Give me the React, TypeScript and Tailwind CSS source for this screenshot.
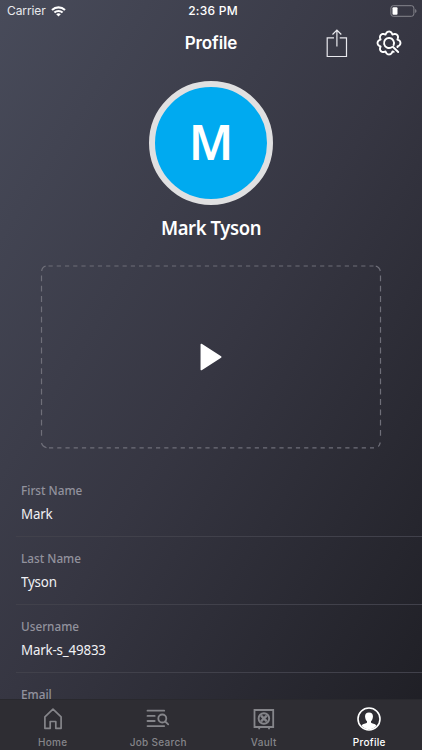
import type { ReactNode } from "react";

const fields = [
  { label: "First Name", value: "Mark" },
  { label: "Last Name", value: "Tyson" },
  { label: "Username", value: "Mark-s_49833" },
  { label: "Email", value: "" },
];

function StatusBar() {
  return (
    <div className="flex h-5 items-center justify-between pr-[5px] pl-[7px] text-[12px] leading-5 text-white">
      <div className="flex w-28 items-center gap-[5px] pt-0.5">
        <span className="tracking-[-0.1px] text-[#e9e9ed]">Carrier</span>
        <svg width="15" height="11" viewBox="0 0 14 11" fill="none" stroke="white" strokeWidth="2.1">
          <path d="M.5 4.1C4.3.4 9.7.4 13.500 4.100" />
          <path d="M2.900 6.600c2.300-2.200 5.900-2.200 8.200 0" />
          <path d="M7 10.600 4.700 8.300a3.300 3.300 0 0 1 4.600 0Z" fill="white" stroke="none" />
        </svg>
      </div>
      <span className="pt-0.5 pl-0.5 font-medium tracking-[0.25px]">2:36 PM</span>
      <div className="flex w-28 justify-end pt-px">
        <svg width="27" height="12" viewBox="0 0 27 12" fill="none">
          <rect x="0.9" y="0.7" width="23" height="10.6" rx="2.4" stroke="#85858d" />
          <rect x="2.5" y="2.3" width="5" height="7.4" rx="1" fill="white" />
          <path d="M25.200 4v4c1.700-.7 1.700-3.300 0-4Z" fill="#85858d" />
        </svg>
      </div>
    </div>
  );
}

function ShareIcon() {
  return (
    <svg width="22" height="30" viewBox="0 0 22 30" fill="none" stroke="#e9e9ee" strokeWidth="1.2">
      <path d="M8 9.800H1.200v18.700h19.300V9.800h-6.800M10.900 18.500V2M6.500 6.500l4.400-4.500 4.400 4.500" />
    </svg>
  );
}

// Outline of an eight-lobed cog, left open at the lower right where the handle crosses it.
const cogOutline = Array.from({ length: 161 }, (_, i) => {
  const angle = ((58 + (i / 160) * 330) * Math.PI) / 180;
  const wave = Math.cos(8 * angle);
  const radius = 10.3 + 1.15 * wave;
  const shift = 0.07 * Math.sin(8 * angle);
  const x = 13 + radius * Math.cos(angle + shift);
  const y = 13 + radius * Math.sin(angle + shift);
  return `${i === 0 ? "M" : "L"}${x.toFixed(2)} ${y.toFixed(2)}`;
}).join("");

function GearIcon() {
  return (
    <svg width="26" height="26" viewBox="0 0 26 26" fill="none" stroke="white" strokeWidth="1.9" strokeLinejoin="round" strokeLinecap="round">
      <path d={cogOutline} />
      <path d="M15.600 17.300A5 5 0 1 1 17.600 15M16.800 16.800l5.400 5.200" />
    </svg>
  );
}

function Header() {
  return (
    <header className="grid h-[47px] grid-cols-3 items-center">
      <span />
      <h1 className="text-center text-[17px] font-semibold tracking-[-0.1px] text-white">Profile</h1>
      <div className="flex items-center justify-end gap-7 pr-5 pb-px">
        <ShareIcon />
        <GearIcon />
      </div>
    </header>
  );
}

function VideoPlaceholder() {
  return (
    <div className="relative mx-auto mt-[23px] flex h-[184px] w-[342px] items-center justify-center">
      <svg className="absolute inset-0" width="342" height="184" viewBox="0 0 342 184" fill="none" stroke="#6f6f79" strokeWidth="1.200">
        <path d="M7.500 1h326" strokeDasharray="4.200 4.030" strokeDashoffset="-1" />
        <path d="M8 182.800h326" strokeDasharray="4.200 4.030" strokeDashoffset="-1" />
        <path d="M1.500 10.500v164M340.500 10.500v164" strokeDasharray="5.800 4.500" />
        <path d="M1.700 6Q2 2.200 5.600 1.200M335.800 1.200Q339.300 2 340.300 6M1.500 178q1 3.500 5 4.700M340.300 177.500q-.8 3-2 4" />
      </svg>
      <svg width="22" height="28" viewBox="0 0 22 28" className="-ml-px">
        <path d="M1.300 1.500 20.700 14 1.300 26.500Z" fill="white" stroke="white" strokeWidth="1.500" strokeLinejoin="round" />
      </svg>
    </div>
  );
}

function HomeIcon() {
  return (
    <svg width="24" height="24" viewBox="0 0 24 24" fill="none" stroke="currentColor" strokeWidth="1.700" strokeLinejoin="round">
      <path d="M3.900 21.300V9.800L12 2.200l8.100 7.600v11.500h-5.300v-6.800H9.200v6.800Z" />
    </svg>
  );
}

function JobSearchIcon() {
  return (
    <svg width="24" height="24" viewBox="0 0 24 24" fill="none" stroke="currentColor" strokeWidth="1.800" strokeLinecap="round">
      <path d="M1.500 3.700h16.700M1.500 8.900h7.200M1.500 14h7.200M1.500 19.100h16.700" />
      <circle cx="16.300" cy="11.500" r="4" />
      <path d="m19.200 14.500 3 2.900" />
    </svg>
  );
}

function VaultIcon() {
  return (
    <svg width="24" height="24" viewBox="0 0 24 24" fill="none" stroke="currentColor" strokeWidth="1.800">
      <path d="M2.500 3h18.700v17H2.500ZM7.200 20v2.200M17 20v2.200" />
      <circle cx="11.900" cy="11.500" r="5.300" strokeWidth="1.900" />
      <path d="m9 8.600 5.800 5.800M14.800 8.600 9 14.400" strokeWidth="2.300" />
    </svg>
  );
}

function ProfileIcon() {
  return (
    <svg width="24" height="24" viewBox="0 0 24 24">
      <circle cx="12" cy="12" r="11" fill="none" stroke="white" strokeWidth="1.600" />
      <path d="M12 5.500c-3 0-4.200 2-3.900 4.500.2 2 .8 3.200 1.900 4.200v1.400c-1 1.300-4 .9-5.500 3.100a10 10 0 0 0 15 0c-1.500-2.200-4.500-1.800-5.500-3.100v-1.400c1.100-1 1.700-2.200 1.900-4.200.3-2.500-.9-4.500-3.900-4.500Z" fill="white" />
    </svg>
  );
}

function Tab({ label, icon, active = false }: { label: string; icon: ReactNode; active?: boolean }) {
  return (
    <div className={`flex flex-col items-center pt-[7px] ${active ? "text-white" : "text-[#85858a]"}`}>
      {icon}
      <span className="mt-[3px] text-[10px] leading-4 font-medium tracking-[0.3px]">{label}</span>
    </div>
  );
}

export default function App() {
  return (
    <div className="flex h-[750px] w-[422px] flex-col overflow-hidden bg-linear-[122deg,#484b5a_0%,#363642_50%,#1e1e24_100%] font-['Inter',sans-serif]">
      <StatusBar />
      <Header />
      <main className="min-h-0 flex-1 overflow-hidden font-['Noto_Sans',sans-serif]">
        <div className="mx-auto mt-[14px] flex size-[124px] items-center justify-center rounded-full border-[6px] border-[#e0e0e1] bg-[#00aaf0] text-[48px] leading-none font-semibold text-white">
          <span className="-mt-0.5">M</span>
        </div>
        <h2 className="mt-2.5 scale-x-[0.97] text-center text-[19px] leading-[27px] font-semibold tracking-[-0.4px] text-white">Mark Tyson</h2>
        <VideoPlaceholder />
        <dl className="mt-5 pl-4">
          {fields.map((field) => (
            <div key={field.label} className="h-[68px] border-b border-[#41414b] pt-[11px] pl-[5px]">
              <dt className="h-[22px] origin-left scale-x-[0.94] text-[12.500px] leading-[22px] font-medium text-[#92929d]">{field.label}</dt>
              <dd className="-mt-px origin-left scale-x-[0.92] text-[14.500px] leading-6 tracking-[-0.2px] text-[#f1f1f4]">{field.value}</dd>
            </div>
          ))}
        </dl>
      </main>
      <nav className="grid h-[51px] shrink-0 grid-cols-4 border-t border-[#29292e] bg-[#2e2d33]">
        <Tab label="Home" icon={<HomeIcon />} />
        <Tab label="Job Search" icon={<JobSearchIcon />} />
        <Tab label="Vault" icon={<VaultIcon />} />
        <Tab label="Profile" icon={<ProfileIcon />} active />
      </nav>
    </div>
  );
}
